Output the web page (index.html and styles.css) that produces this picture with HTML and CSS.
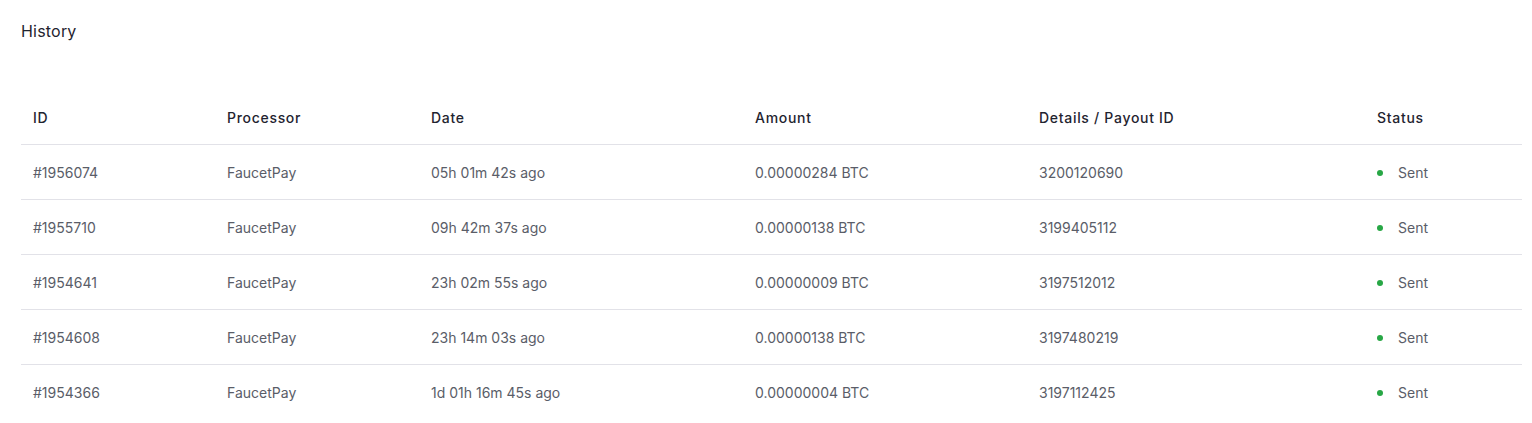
FILE: index.html
```html
<!DOCTYPE html>
<html>
<head>
<meta charset="utf-8">
<link rel="stylesheet" href="styles.css">
</head>
<body>
<div class="card">
  <h2 class="title">History</h2>
  <table class="history">
    <colgroup>
      <col class="c1"><col class="c2"><col class="c3"><col class="c4"><col class="c5"><col class="c6">
    </colgroup>
    <thead>
      <tr><th>ID</th><th>Processor</th><th>Date</th><th>Amount</th><th>Details / Payout ID</th><th>Status</th></tr>
    </thead>
    <tbody>
      <tr><td>#1956074</td><td>FaucetPay</td><td>05h 01m 42s ago</td><td>0.00000284 BTC</td><td>3200120690</td><td><span class="dot"></span>Sent</td></tr>
      <tr><td>#1955710</td><td>FaucetPay</td><td>09h 42m 37s ago</td><td>0.00000138 BTC</td><td>3199405112</td><td><span class="dot"></span>Sent</td></tr>
      <tr><td>#1954641</td><td>FaucetPay</td><td>23h 02m 55s ago</td><td>0.00000009 BTC</td><td>3197512012</td><td><span class="dot"></span>Sent</td></tr>
      <tr><td>#1954608</td><td>FaucetPay</td><td>23h 14m 03s ago</td><td>0.00000138 BTC</td><td>3197480219</td><td><span class="dot"></span>Sent</td></tr>
      <tr><td>#1954366</td><td>FaucetPay</td><td>1d 01h 16m 45s ago</td><td>0.00000004 BTC</td><td>3197112425</td><td><span class="dot"></span>Sent</td></tr>
    </tbody>
  </table>
</div>
</body>
</html>
```
FILE: styles.css
```css
html, body {
  margin: 0;
  padding: 0;
  background: #ffffff;
}
body {
  font-family: "Inter", "Open Sans", sans-serif;
}
.card {
  padding: 19px 10px 0 21px;
}
.title {
  margin: 0;
  font-size: 16px;
  font-weight: 400;
  line-height: 24px;
  color: #1f2430;
  letter-spacing: 0.2px;
}
.history {
  margin-top: 47px;
  width: 1501px;
  border-collapse: collapse;
  table-layout: fixed;
}
.c1 { width: 194px; }
.c2 { width: 204px; }
.c3 { width: 324px; }
.c4 { width: 284px; }
.c5 { width: 338px; }
.c6 { width: 157px; }
.history th {
  text-align: left;
  font-weight: 500;
  font-size: 14px;
  color: #1f2430;
  height: 54px;
  padding: 0 12px;
  border-bottom: 1px solid #e2e2e8;
  letter-spacing: 0.7px;
}
.history td {
  font-size: 14px;
  color: #5a5d68;
  height: 54px;
  padding: 0 12px;
  border-bottom: 1px solid #e2e2e8;
  letter-spacing: 0;
}
.history tbody tr:last-child td {
  border-bottom: none;
}
.dot {
  display: inline-block;
  width: 6px;
  height: 6px;
  border-radius: 50%;
  background: #28a745;
  margin: 0 15px 1px 0;
  vertical-align: middle;
}
```
